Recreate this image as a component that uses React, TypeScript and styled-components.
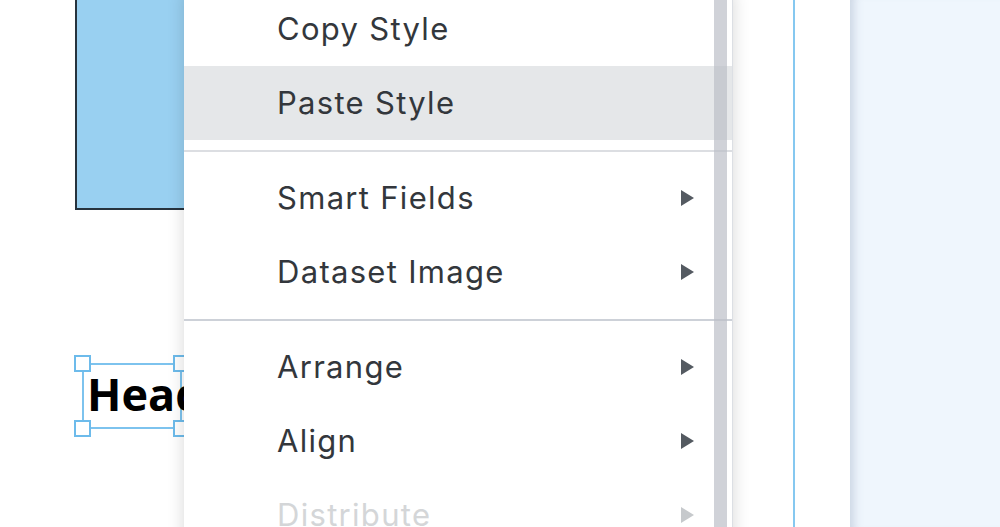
import React from 'react';
import styled, { createGlobalStyle } from 'styled-components';

const Global = createGlobalStyle`
  html, body { margin: 0; padding: 0; width: 1000px; height: 527px; overflow: hidden; background: #fff; }
  #root { width: 1000px; height: 527px; }
`;

const Layout = styled.div`
  display: flex;
  width: 1000px;
  height: 527px;
  overflow: hidden;
`;

const Canvas = styled.div`
  position: relative;
  flex: 0 0 850px;
  height: 100%;
  background: #fff;
  overflow: hidden;
`;

const SidePanel = styled.div`
  flex: 1;
  background: #eff6fd;
  box-shadow: inset 12px 0 10px -8px rgba(110, 130, 160, 0.28);
`;

const Shape = styled.div`
  position: absolute;
  left: 75px;
  top: -10px;
  width: 180px;
  height: 220px;
  box-sizing: border-box;
  background: #99d0f1;
  border-left: 2px solid #27333e;
  border-bottom: 2px solid #27333e;
`;

const PageEdge = styled.div`
  position: absolute;
  left: 793px;
  top: 0;
  bottom: 0;
  width: 2px;
  background: #86c8f0;
`;

const TextBox = styled.div`
  position: absolute;
  left: 82px;
  top: 363px;
  width: 100px;
  height: 66px;
  box-sizing: border-box;
  border: 2px solid #7dc3ee;
`;

const Heading = styled.div`
  position: absolute;
  left: 3px;
  top: 1px;
  font-family: "Open Sans", "Noto Sans", sans-serif;
  font-weight: 700;
  font-size: 45px;
  line-height: 56px;
  color: #000;
  white-space: nowrap;
`;

const Handle = styled.div<{ $x: 'left' | 'right'; $y: 'top' | 'bottom' }>`
  position: absolute;
  width: 17px;
  height: 17px;
  box-sizing: border-box;
  background: #fff;
  border: 2px solid #6dbbeb;
  ${(p) => (p.$x === 'left' ? 'left: -10px;' : 'right: -10px;')}
  ${(p) => (p.$y === 'top' ? 'top: -10px;' : 'bottom: -10px;')}
`;

const Menu = styled.div`
  position: absolute;
  left: 184px;
  top: -8px;
  width: 549px;
  box-sizing: border-box;
  background: #fff;
  border-right: 1px solid #dcdfe4;
  box-shadow: 0 0 16px rgba(0, 0, 0, 0.16);
  font-family: Inter, "Noto Sans", sans-serif;
`;

const Item = styled.div<{ $active?: boolean; $disabled?: boolean }>`
  display: flex;
  align-items: center;
  justify-content: space-between;
  box-sizing: border-box;
  height: 74px;
  padding: 0 38px 2px 93px;
  font-size: 31px;
  letter-spacing: 1.3px;
  color: ${(p) => (p.$disabled ? '#d4d6d8' : '#33373c')};
  background: ${(p) => (p.$active ? '#e5e7e9' : 'transparent')};
`;

const Arrow = styled.span<{ $disabled?: boolean }>`
  width: 0;
  height: 0;
  margin-top: 2px;
  border-top: 8px solid transparent;
  border-bottom: 8px solid transparent;
  border-left: 13px solid ${(p) => (p.$disabled ? '#c6c9cc' : '#545a61')};
`;

const Separator = styled.div<{ $strong?: boolean }>`
  height: 2px;
  margin: 10px 0 9px;
  background: ${(p) => (p.$strong ? '#cdd1d8' : '#dcdee2')};
`;

const Scrollbar = styled.div`
  position: absolute;
  top: 0;
  bottom: 0;
  right: 5px;
  width: 13px;
  background: rgba(187, 190, 198, 0.69);
`;

export default function App() {
  return (
    <>
      <Global />
      <Layout>
        <Canvas>
          <Shape />
          <TextBox>
            <Heading>Heading</Heading>
            <Handle $x="left" $y="top" />
            <Handle $x="right" $y="top" />
            <Handle $x="left" $y="bottom" />
            <Handle $x="right" $y="bottom" />
          </TextBox>
          <PageEdge />
          <Menu>
            <Item>Copy Style</Item>
            <Item $active>Paste Style</Item>
            <Separator />
            <Item>
              Smart Fields
              <Arrow />
            </Item>
            <Item>
              Dataset Image
              <Arrow />
            </Item>
            <Separator $strong />
            <Item>
              Arrange
              <Arrow />
            </Item>
            <Item>
              Align
              <Arrow />
            </Item>
            <Item $disabled>
              Distribute
              <Arrow $disabled />
            </Item>
            <Scrollbar />
          </Menu>
        </Canvas>
        <SidePanel />
      </Layout>
    </>
  );
}
